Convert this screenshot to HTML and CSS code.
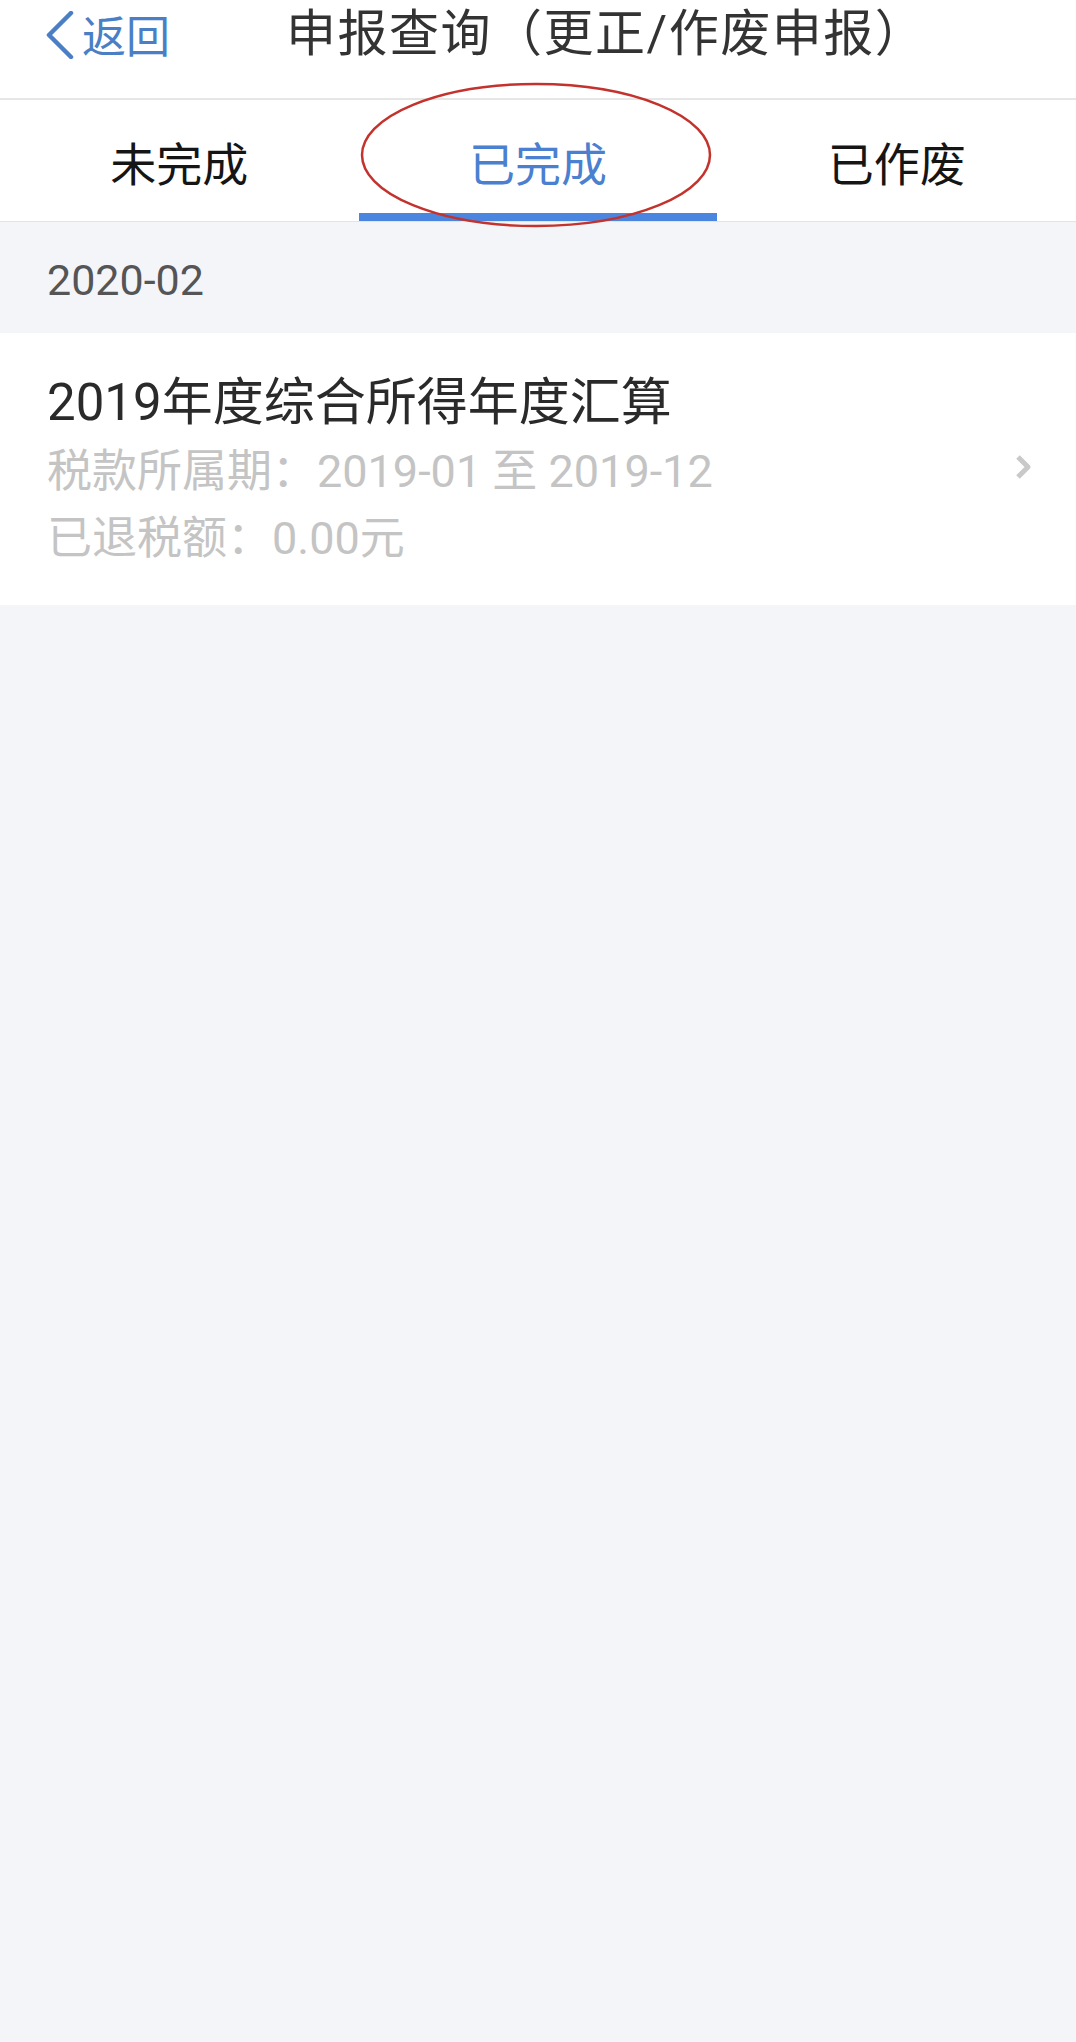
FILE: index.html
```html
<!DOCTYPE html>
<html lang="zh-CN">
<head>
    <meta charset="UTF-8">
    <meta name="viewport" content="width=device-width, initial-scale=1.0">
    <title>申报查询</title>
    <link rel="stylesheet" href="styles.css">
</head>
<body>
    <header class="nav-bar">
        <a class="back" href="#">
            <svg class="back-icon" width="30" height="48" viewBox="0 0 30 48">
                <polyline points="26,2 4,24 26,46" fill="none" stroke="#4a7fc6" stroke-width="4.5" stroke-linecap="round" stroke-linejoin="round"/>
            </svg>
            <span>返回</span>
        </a>
        <h1>申报查询（更正/作废申报）</h1>
    </header>

    <nav class="tabs">
        <div class="tab">未完成</div>
        <div class="tab active">已完成</div>
        <div class="tab">已作废</div>
        <svg class="mark" width="356" height="150" viewBox="0 0 356 150">
            <ellipse cx="178" cy="75" rx="174" ry="71" fill="none" stroke="#c3322c" stroke-width="2.5"/>
        </svg>
    </nav>

    <main>
        <div class="month">2020-02</div>
        <div class="record">
            <div class="record-info">
                <div class="record-title">2019年度综合所得年度汇算</div>
                <div class="record-line">税款所属期：2019-01 至 2019-12</div>
                <div class="record-line">已退税额：0.00元</div>
            </div>
            <svg class="arrow" width="18" height="26" viewBox="0 0 18 26">
                <polyline points="4,3 14,13 4,23" fill="none" stroke="#c9c9c9" stroke-width="5" stroke-linejoin="round"/>
            </svg>
        </div>
    </main>
</body>
</html>
```

FILE: styles.css
```css
* {
    margin: 0;
    padding: 0;
    box-sizing: border-box;
}
body {
    font-family: Roboto, "Noto Sans CJK SC", sans-serif;
    background: #f4f5f9;
    color: #333;
    min-height: 2042px;
}
.nav-bar {
    height: 100px;
    background: white;
    border-bottom: 2px solid #e6e6e6;
    display: flex;
    align-items: flex-start;
    padding-left: 45px;
}
.back {
    display: flex;
    align-items: center;
    gap: 7px;
    height: 68px;
    color: #4a7fc6;
    text-decoration: none;
    font-size: 44px;
}
.back-icon {
    margin-top: 2px;
}
.nav-bar h1 {
    margin-left: 116px;
    font-size: 50px;
    font-weight: normal;
    letter-spacing: 1.5px;
    line-height: 68px;
    color: #333;
}
.tabs {
    position: relative;
    display: grid;
    grid-template-columns: repeat(3, 1fr);
    background: white;
    border-bottom: 1px solid #e3e3e3;
}
.tab {
    height: 121px;
    padding-top: 9px;
    border-bottom: 8px solid transparent;
    display: flex;
    align-items: center;
    justify-content: center;
    font-size: 46px;
    color: #151515;
}
.tab.active {
    color: #4a80cf;
    border-bottom-color: #4a86e0;
}
.mark {
    position: absolute;
    left: 358px;
    top: -20px;
    pointer-events: none;
}
.month {
    height: 111px;
    padding: 4px 0 0 47px;
    display: flex;
    align-items: center;
    font-size: 43px;
    color: #555;
}
.record {
    background: white;
    display: flex;
    align-items: center;
    padding: 36px 44px 33px 47px;
}
.record-info {
    flex: 1;
}
.record-title {
    font-size: 51px;
    line-height: 67px;
    color: #2a2a2a;
}
.record-line {
    font-size: 45px;
    line-height: 67px;
    color: #c4c4c4;
}
.record-title + .record-line {
    margin-top: 2px;
}
.arrow {
    margin-top: -8px;
}
```
